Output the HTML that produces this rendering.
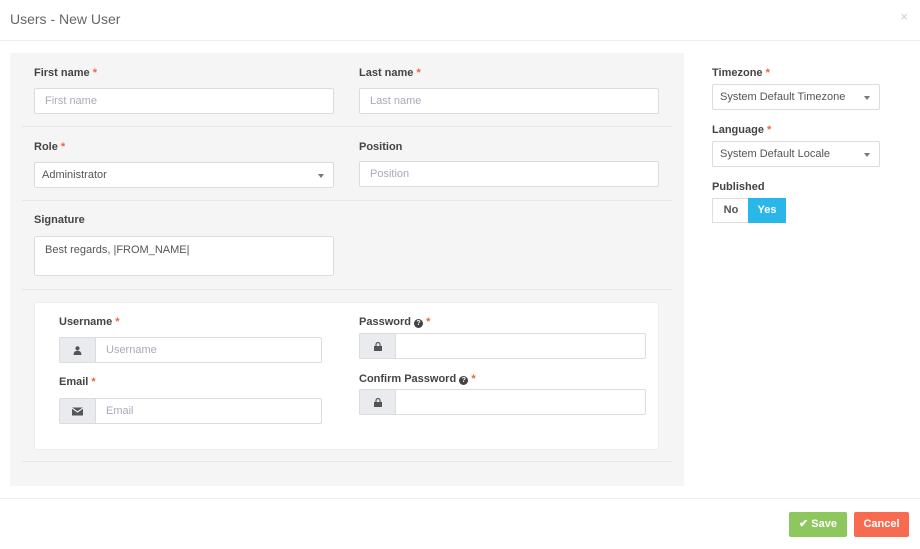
<!DOCTYPE html><html><head><style>
*{box-sizing:border-box;margin:0;padding:0}
body{width:920px;height:549px;background:#fff;font-family:"Liberation Sans",sans-serif;font-size:11px;color:#555;position:relative;overflow:hidden}
.a{position:absolute}
.lbl{position:absolute;font-weight:bold;color:#444;font-size:11px}
.lbl i{color:#f0643c;font-style:normal}
.in{position:absolute;background:#fff;border:1px solid #dcdcdc;border-radius:2px;height:26px;line-height:24px;padding-left:10px;color:#aab;font-size:11px}
.sel{color:#555;padding-left:7px}
.sel:after{content:"";position:absolute;right:9px;top:11px;border-left:3px solid transparent;border-right:3px solid transparent;border-top:4px solid #777}
.sep{position:absolute;height:1px;background:#e6e6e6}
.ad{position:absolute;left:0;top:0;bottom:0;width:36px;background:#e9ebee;border-right:1px solid #dcdcdc}
.q{display:inline-block;width:9px;height:9px;border-radius:50%;background:#444;color:#fff;font-size:7px;line-height:9px;text-align:center;vertical-align:0}
</style></head><body>
<div class="a" style="left:10px;top:11px;font-size:14px;color:#666">Users - New User</div>
<div class="a" style="right:12px;top:9px;color:#ccc;font-size:13px">×</div>
<div class="sep" style="left:0;width:920px;top:40px;background:#eee"></div>
<div class="a" style="left:10px;top:53px;width:674px;height:433px;background:#f5f5f5"></div>

<div class="lbl" style="left:34px;top:67px">First name <i>*</i></div>
<div class="in" style="left:34px;top:88px;width:300px">First name</div>
<div class="lbl" style="left:359px;top:67px">Last name <i>*</i></div>
<div class="in" style="left:359px;top:88px;width:300px">Last name</div>
<div class="sep" style="left:22px;width:650px;top:126px"></div>

<div class="lbl" style="left:34px;top:141px">Role <i>*</i></div>
<div class="in sel" style="left:34px;top:162px;width:300px">Administrator</div>
<div class="lbl" style="left:359px;top:141px">Position</div>
<div class="in" style="left:359px;top:161px;width:300px">Position</div>
<div class="sep" style="left:22px;width:650px;top:200px"></div>

<div class="lbl" style="left:34px;top:214px">Signature</div>
<div class="in" style="left:34px;top:236px;width:300px;height:40px;color:#555;line-height:26px">Best regards, |FROM_NAME|</div>
<div class="sep" style="left:22px;width:650px;top:289px"></div>

<div class="a" style="left:34px;top:302px;width:625px;height:148px;background:#fff;border:1px solid #eee;border-radius:2px"></div>
<div class="lbl" style="left:59px;top:316px">Username <i>*</i></div>
<div class="in" style="left:59px;top:337px;width:263px;padding-left:46px">
<div class="ad"><svg class="a" style="left:13px;top:8px" width="9" height="9" viewBox="0 0 9 9"><circle cx="4.5" cy="2.3" r="2.1" fill="#555"/><path d="M0.5 9 Q0.5 4.8 4.5 4.8 Q8.5 4.8 8.5 9Z" fill="#555"/></svg></div>Username</div>
<div class="lbl" style="left:59px;top:376px">Email <i>*</i></div>
<div class="in" style="left:59px;top:398px;width:263px;padding-left:46px">
<div class="ad"><svg class="a" style="left:12px;top:8px" width="11" height="9" viewBox="0 0 11 9"><rect x="0" y="0.5" width="11" height="8" fill="#555"/><path d="M0 1 L5.5 5 L11 1" stroke="#e9ebee" stroke-width="1.2" fill="none"/></svg></div>Email</div>
<div class="lbl" style="left:359px;top:316px">Password <span class="q">?</span> <i>*</i></div>
<div class="in" style="left:359px;top:333px;width:287px"><div class="ad"><svg class="a" style="left:14px;top:8px" width="8" height="9" viewBox="0 0 8 9"><rect x="0" y="4" width="8" height="5" fill="#555"/><path d="M2 4 V2.5 A2 2 0 0 1 6 2.5 V4" stroke="#555" fill="none" stroke-width="1.2"/></svg></div></div>
<div class="lbl" style="left:359px;top:373px">Confirm Password <span class="q">?</span> <i>*</i></div>
<div class="in" style="left:359px;top:389px;width:287px"><div class="ad"><svg class="a" style="left:14px;top:8px" width="8" height="9" viewBox="0 0 8 9"><rect x="0" y="4" width="8" height="5" fill="#555"/><path d="M2 4 V2.5 A2 2 0 0 1 6 2.5 V4" stroke="#555" fill="none" stroke-width="1.2"/></svg></div></div>
<div class="sep" style="left:22px;width:650px;top:461px"></div>

<div class="lbl" style="left:712px;top:67px">Timezone <i>*</i></div>
<div class="in sel" style="left:712px;top:84px;width:168px">System Default Timezone</div>
<div class="lbl" style="left:712px;top:124px">Language <i>*</i></div>
<div class="in sel" style="left:712px;top:141px;width:168px">System Default Locale</div>
<div class="lbl" style="left:712px;top:181px">Published</div>
<div class="a" style="left:712px;top:198px;width:37px;height:25px;border:1px solid #ddd;border-right:none;background:#fff;color:#555;font-weight:bold;text-align:center;line-height:23px">No</div>
<div class="a" style="left:748px;top:198px;width:38px;height:25px;background:#29b6e8;color:#fff;font-weight:bold;text-align:center;line-height:25px">Yes</div>

<div class="sep" style="left:0;width:920px;top:498px;background:#eee"></div>
<div class="a" style="left:789px;top:512px;width:58px;height:25px;background:#8dc75e;border-radius:2px;color:#fff;font-weight:bold;text-align:center;line-height:25px">✔ Save</div>
<div class="a" style="left:854px;top:512px;width:55px;height:25px;background:#f76b50;border-radius:2px;color:#fff;font-weight:bold;text-align:center;line-height:25px">Cancel</div>
</body></html>
